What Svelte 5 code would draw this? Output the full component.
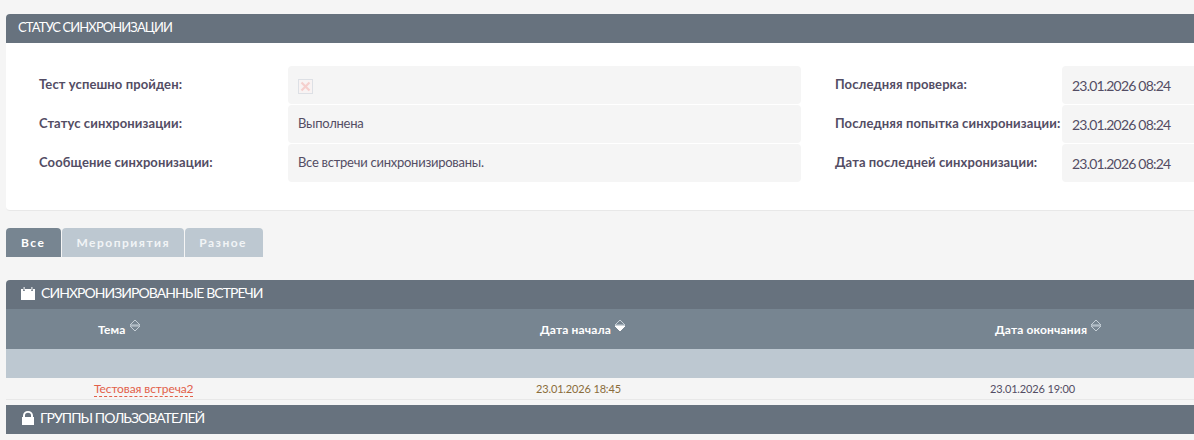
<script>
  const status = [
    { label: 'Тест успешно пройден:', value: null, label2: 'Последняя проверка:', value2: '23.01.2026 08:24' },
    { label: 'Статус синхронизации:', value: 'Выполнена', label2: 'Последняя попытка синхронизации:', value2: '23.01.2026 08:24' },
    { label: 'Сообщение синхронизации:', value: 'Все встречи синхронизированы.', label2: 'Дата последней синхронизации:', value2: '23.01.2026 08:24' }
  ];
  const tabs = ['Все', 'Мероприятия', 'Разное'];
</script>

<div class="page">
  <section class="panel">
    <h2 class="bar">СТАТУС СИНХРОНИЗАЦИИ</h2>
    <div class="status">
      {#each status as r}
        <div class="lbl">{r.label}</div>
        <div class="val">
          {#if r.value}<span class="txt">{r.value}</span>{:else}
            <svg class="check" width="15" height="15" viewBox="0 0 15 15">
              <rect x=".5" y=".5" width="14" height="14" fill="#f8f3f3" stroke="#dde0e5"/>
              <path d="M3.5 3.5l8 8M11.5 3.5l-8 8" stroke="#f5cfcd" stroke-width="2.2"/>
            </svg>
          {/if}
        </div>
        <div class="lbl two">{r.label2}</div>
        <div class="val date">{r.value2}</div>
      {/each}
    </div>
  </section>

  <div class="tabs">
    {#each tabs as t, i}
      <span class="tab" class:active={i === 0}>{t}</span>
    {/each}
  </div>

  <section class="list">
    <h3 class="bar big">
      <svg class="cal" width="14" height="13" viewBox="0 0 14 13" fill="#fff">
        <path d="M0 2h2v2h2V2h6v2h2V2h2v11H0z"/>
        <rect x="2.6" y="0" width="1" height="3.4"/>
        <rect x="10.4" y="0" width="1" height="3.4"/>
      </svg>
      СИНХРОНИЗИРОВАННЫЕ ВСТРЕЧИ
    </h3>
    <div class="row head">
      <div class="c1">Тема <svg class="sort" width="12" height="13" viewBox="0 0 12 13"><path d="M6 1l5 5H1z M1 7h10l-5 5z" fill="none" stroke="#c5ced6"/></svg></div>
      <div class="c2">Дата начала <svg class="sort" width="12" height="13" viewBox="0 0 12 13"><path d="M6 1l5 5H1z" fill="none" stroke="#c5ced6"/><path d="M1 7h10l-5 5z" fill="#fff" stroke="#fff"/></svg></div>
      <div class="c3">Дата окончания <svg class="sort" width="12" height="13" viewBox="0 0 12 13"><path d="M6 1l5 5H1z M1 7h10l-5 5z" fill="none" stroke="#c5ced6"/></svg></div>
    </div>
    <div class="filter"></div>
    <div class="row data">
      <div class="c1"><span class="link">Тестовая встреча2</span></div>
      <div class="c2 start">23.01.2026 18:45</div>
      <div class="c3">23.01.2026 19:00</div>
    </div>
    <h3 class="bar big groups">
      <svg class="lock" width="12" height="14" viewBox="0 0 12 14" fill="#fff">
        <path d="M1 6V4.5a5 4.5 0 0 1 10 0V6h1v8H0V6zM3 6h6V4.5a3 2.8 0 0 0-6 0z" fill-rule="evenodd"/>
      </svg>
      ГРУППЫ ПОЛЬЗОВАТЕЛЕЙ
    </h3>
  </section>
</div>

<style>
  :global(body) {
    background: #f5f5f5;
    overflow: hidden;
    font-family: Lato, "Liberation Sans", sans-serif;
    color: #534d64;
  }
  .page {
    width: 1500px;
    height: 440px;
    padding: 14px 0 0 6px;
    box-sizing: border-box;
    overflow: hidden;
  }
  .panel {
    background: #fff;
    border-radius: 4px;
    border-bottom: 1px solid #e8e8e8;
    height: 197px;
    box-sizing: border-box;
  }
  .bar {
    margin: 0;
    height: 29px;
    line-height: 26px;
    padding-left: 12px;
    background: #67727e;
    color: #fff;
    font-size: 13px;
    font-weight: 400;
    letter-spacing: -0.9px;
    border-radius: 4px 4px 0 0;
  }
  .big {
    display: flex;
    align-items: center;
    gap: 6px;
    box-sizing: border-box;
    padding: 0 0 3px 15px;
    font-size: 14px;
    letter-spacing: -0.95px;
  }
  .big .cal { margin-top: 1px; }
  .big .lock { margin: -1px 0 0 1px; }
  .status {
    display: grid;
    grid-template-columns: 249px 513px 261px 300px;
    grid-auto-rows: 38px;
    row-gap: 1px;
    padding: 23px 0 0 33px;
    font-size: 13px;
  }
  .lbl {
    font-weight: 700;
    letter-spacing: 0.1px;
    line-height: 38px;
    height: 38px;
    margin-top: -1px;
    white-space: nowrap;
  }
  .two { padding-left: 34px; }
  .val {
    display: flex;
    align-items: center;
    padding-left: 10px;
    background: #f5f5f5;
    border-radius: 4px;
  }
  .txt { letter-spacing: -0.25px; margin-top: -2px; }
  .date { font-size: 14px; letter-spacing: -0.8px; }
  .check { display: block; margin-top: 2px; }
  .tabs {
    display: flex;
    gap: 1px;
    margin-top: 17px;
    height: 29px;
  }
  .tab {
    padding: 0 14px;
    line-height: 29px;
    background: #bdc8d1;
    color: #f1f4f6;
    font-size: 12px;
    font-weight: 700;
    letter-spacing: 1.5px;
    border-radius: 4px 4px 0 0;
  }
  .tab:last-child { padding-right: 16px; }
  .tab.active { background: #778591; color: #fff; padding: 0 16px 0 15px; }
  .list { margin-top: 23px; }
  .row {
    display: grid;
    grid-template-columns: 344px 456px 456px;
    white-space: nowrap;
  }
  .head {
    height: 40px;
    background: #778591;
    color: #fff;
    font-size: 12px;
    font-weight: 700;
    letter-spacing: 0.15px;
    line-height: 42px;
  }
  .sort { vertical-align: 2px; }
  .head .c1 { padding-left: 92px; }
  .head .c2 { padding-left: 190px; }
  .head .c3 { padding-left: 189px; }
  .filter { height: 29px; background: #bdc8d1; }
  .data {
    height: 21px;
    margin-bottom: 5px;
    border-bottom: 1px solid #e8e8e8;
    font-size: 11px;
    letter-spacing: -0.15px;
    line-height: 22px;
  }
  .data .c1 { padding-left: 88px; }
  .data .c2 { padding-left: 186px; }
  .data .c3 { padding-left: 184px; }
  .start { color: #8a6d3b; }
  .link {
    color: #e2604a;
    font-size: 12px;
    font-weight: 400;
    letter-spacing: -0.1px;
    border-bottom: 1px dashed #e2604a;
  }
  .groups { border-radius: 0; }
</style>
